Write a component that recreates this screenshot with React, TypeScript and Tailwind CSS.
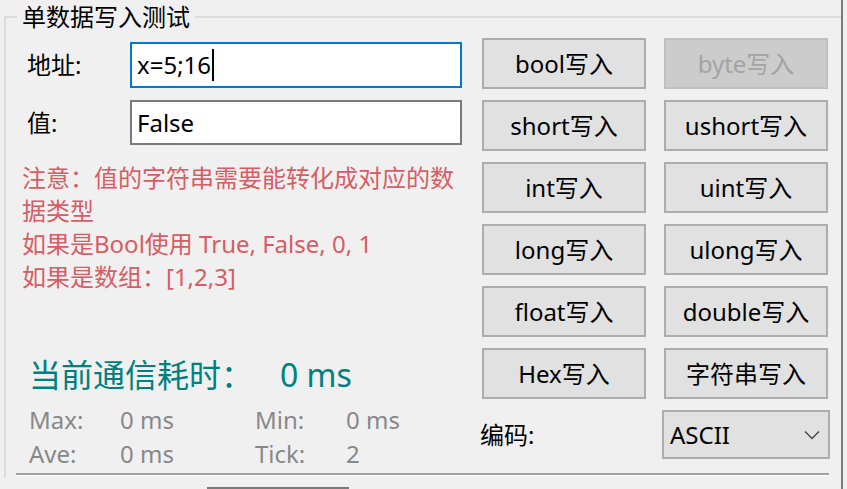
import React from 'react';

const buttons = [
  { label: 'bool写入' },
  { label: 'byte写入', disabled: true },
  { label: 'short写入' },
  { label: 'ushort写入' },
  { label: 'int写入' },
  { label: 'uint写入' },
  { label: 'long写入' },
  { label: 'ulong写入' },
  { label: 'float写入' },
  { label: 'double写入' },
  { label: 'Hex写入' },
  { label: '字符串写入' },
];

function WriteButton({ label, disabled }: { label: string; disabled?: boolean }) {
  return (
    <button
      type="button"
      disabled={disabled}
      className={`h-[51px] w-[164px] border-2 text-[24px] leading-[28px] ${
        disabled
          ? 'border-[#bfbfbf] bg-[#cccccc] text-[#a3a3a3]'
          : 'border-[#adadad] bg-[#e1e1e1] text-black'
      }`}
    >
      {label}
    </button>
  );
}

export default function App() {
  return (
    <div className="flex h-[489px] w-[847px] overflow-hidden bg-[#f0f0f0] pl-[4px] font-['Noto_Sans','Noto_Sans_CJK_SC',sans-serif] text-black">
      {/* Group box */}
      <div className="w-[837px] shrink-0 pt-[16px]">
        <div className="relative h-[462px] border-l-2 border-t-2 border-[#dcdcdc]">
          <div className="absolute -top-[14px] left-[11px] bg-[#f0f0f0] px-[5px] text-[24px] leading-[26px]">
            单数据写入测试
          </div>

          <div className="flex h-[455px]">
            {/* Left column */}
            <div className="w-[440px] shrink-0 pl-[16px] box-content">
              <div className="mt-[24px] flex h-[46px] items-center">
                <span className="w-[108px] pl-[5px] text-[24px] leading-[28px]">地址:</span>
                <div className="flex h-[46px] w-[332px] items-center border-2 border-[#0078d7] bg-white pl-[5px] text-[24px] leading-[28px]">
                  <span>x=5;16</span>
                  <span className="ml-[1px] inline-block h-[32px] w-[2px] bg-black" />
                </div>
              </div>
              <div className="mt-[12px] flex h-[45px] items-center">
                <span className="w-[108px] pl-[5px] text-[24px] leading-[28px]">值:</span>
                <div className="flex h-[45px] w-[332px] items-center border-2 border-[#7a7a7a] bg-white pl-[5px] text-[24px] leading-[28px]">
                  False
                </div>
              </div>

              <div className="mt-[16px] whitespace-nowrap text-[24px] leading-[33px] text-[#d85c64]">
                <div>注意：值的字符串需要能转化成对应的数</div>
                <div>据类型</div>
                <div>如果是Bool使用 True, False, 0, 1</div>
                <div>如果是数组：[1,2,3]</div>
              </div>

              <div className="mt-[62px] flex whitespace-nowrap pl-[7px] text-[32px] leading-[40px] text-[#008080]">
                <span className="w-[251px]">当前通信耗时：</span>
                <span>0 ms</span>
              </div>

              <div className="mt-[8px] grid grid-cols-[91px_135px_91px_auto] pl-[7px] text-[24px] leading-[34px] text-[#888888]">
                <span>Max:</span>
                <span>0 ms</span>
                <span>Min:</span>
                <span>0 ms</span>
                <span>Ave:</span>
                <span>0 ms</span>
                <span>Tick:</span>
                <span>2</span>
              </div>
            </div>

            {/* Right column */}
            <div className="ml-[20px] pt-[20px]">
              <div className="grid grid-cols-[164px_164px] gap-x-[18px] gap-y-[11px]">
                {buttons.map((b) => (
                  <WriteButton key={b.label} label={b.label} disabled={b.disabled} />
                ))}
              </div>
              <div className="-mx-[2px] mt-[11px] flex items-center justify-between">
                <span className="text-[24px] leading-[28px]">编码:</span>
                <div className="flex h-[49px] w-[168px] items-center justify-between border-2 border-[#adadad] bg-[#e1e1e1] pl-[6px] pr-[8px]">
                  <span className="text-[24px] leading-[28px]">ASCII</span>
                  <svg width="16" height="10" viewBox="0 0 16 10" fill="none">
                    <path d="M1 1.5 L8 8.5 L15 1.5" stroke="#4a4a4a" strokeWidth="1.5" />
                  </svg>
                </div>
              </div>
            </div>
          </div>

          {/* Etched separator */}
          <div className="ml-[10px] h-[3px] w-[813px] border-t-2 border-b border-t-[#a0a0a0] border-b-white" />
        </div>
        <div className="ml-[203px] mt-[9px] h-[10px] w-[142px] border-2 border-b-0 border-[#7a7a7a]" />
      </div>

      {/* Outer splitter line */}
      <div className="h-full w-[2px] shrink-0 bg-[#7a7a7a]" />
    </div>
  );
}
